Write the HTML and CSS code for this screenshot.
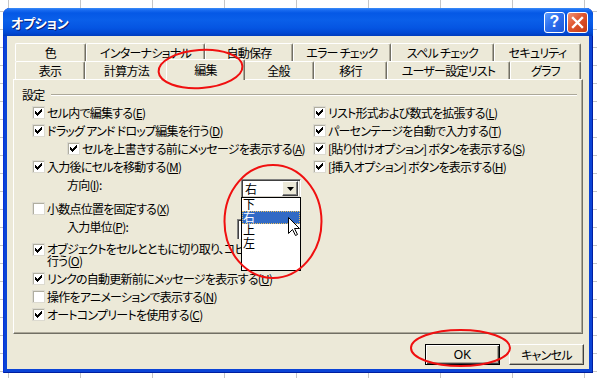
FILE: index.html
```html
<!DOCTYPE html>
<html lang="ja">
<head>
<meta charset="utf-8">
<title>オプション</title>
<link rel="stylesheet" href="styles.css">
</head>
<body>
<div class="window">
  <div class="titlebar">
    <span class="title">オプション</span>
    <div class="tb-btns">
      <span class="tb-btn help">?</span>
      <span class="tb-btn close"><svg width="13" height="13" viewBox="0 0 13 13"><path d="M2 2L11 11M11 2L2 11" stroke="#fff" stroke-width="2.4" stroke-linecap="square"/></svg></span>
    </div>
  </div>
  <div class="client">
    <div class="tabs">
      <div class="tabrow">
        <div class="tab t-71">色</div>
        <div class="tab t-119">インターナショナル</div>
        <div class="tab t-88">自動保存</div>
        <div class="tab t-98">エラー チェック</div>
        <div class="tab t-103">スペル チェック</div>
        <div class="tab t-87">セキュリティ</div>
      </div>
      <div class="tabrow">
        <div class="tab t-70">表示</div>
        <div class="tab t-83">計算方法</div>
        <div class="tab t-75 sel">編集</div>
        <div class="tab t-71">全般</div>
        <div class="tab t-73">移行</div>
        <div class="tab t-123">ユーザー設定リスト</div>
        <div class="tab t-71">グラフ</div>
      </div>
    </div>
    <div class="panel">
      <div class="group-head"><span>設定</span><span class="etch"></span></div>
      <div class="settings">
        <div class="col-left">
          <div class="row"><span class="cb"><svg class="chk" width="7" height="7" viewBox="0 0 7 7"><path d="M0 2h1v3H0zM1 3h1v3H1zM2 4h1v3H2zM3 3h1v3H3zM4 2h1v3H4zM5 1h1v3H5zM6 0h1v3H6z"/></svg></span>セル内で編集する(<u>E</u>)</div>
          <div class="row"><span class="cb"><svg class="chk" width="7" height="7" viewBox="0 0 7 7"><path d="M0 2h1v3H0zM1 3h1v3H1zM2 4h1v3H2zM3 3h1v3H3zM4 2h1v3H4zM5 1h1v3H5zM6 0h1v3H6z"/></svg></span>ドラッグ アンド ドロップ編集を行う(<u>D</u>)</div>
          <div class="row indent"><span class="cb"><svg class="chk" width="7" height="7" viewBox="0 0 7 7"><path d="M0 2h1v3H0zM1 3h1v3H1zM2 4h1v3H2zM3 3h1v3H3zM4 2h1v3H4zM5 1h1v3H5zM6 0h1v3H6z"/></svg></span>セルを上書きする前にメッセージを表示する(<u>A</u>)</div>
          <div class="row"><span class="cb"><svg class="chk" width="7" height="7" viewBox="0 0 7 7"><path d="M0 2h1v3H0zM1 3h1v3H1zM2 4h1v3H2zM3 3h1v3H3zM4 2h1v3H4zM5 1h1v3H5zM6 0h1v3H6z"/></svg></span>入力後にセルを移動する(<u>M</u>)</div>
          <div class="row indent">
            <span class="field-label dir-label">方向(<u>I</u>):</span>
            <div class="combo"><span class="combo-text">右</span><span class="drop-btn"><svg width="7" height="4" viewBox="0 0 7 4"><path d="M0 0h7L3.5 4z"/></svg></span></div>
          </div>
          <div class="row gap6"><span class="cb"></span>小数点位置を固定する(<u>X</u>)</div>
          <div class="row indent">
            <span class="field-label unit-label">入力単位(<u>P</u>):</span>
            <div class="textbox"></div>
          </div>
          <div class="row multi">
            <span class="cb"><svg class="chk" width="7" height="7" viewBox="0 0 7 7"><path d="M0 2h1v3H0zM1 3h1v3H1zM2 4h1v3H2zM3 3h1v3H3zM4 2h1v3H4zM5 1h1v3H5zM6 0h1v3H6z"/></svg></span>
            <span class="multi-text"><span class="line clip">オブジェクトをセルとともに切り取り、コピー、並べ替えを</span><span class="line">行う(<u>O</u>)</span></span>
          </div>
          <div class="row gap2"><span class="cb"><svg class="chk" width="7" height="7" viewBox="0 0 7 7"><path d="M0 2h1v3H0zM1 3h1v3H1zM2 4h1v3H2zM3 3h1v3H3zM4 2h1v3H4zM5 1h1v3H5zM6 0h1v3H6z"/></svg></span>リンクの自動更新前にメッセージを表示する(<u>U</u>)</div>
          <div class="row"><span class="cb"></span>操作をアニメーションで表示する(<u>N</u>)</div>
          <div class="row"><span class="cb"><svg class="chk" width="7" height="7" viewBox="0 0 7 7"><path d="M0 2h1v3H0zM1 3h1v3H1zM2 4h1v3H2zM3 3h1v3H3zM4 2h1v3H4zM5 1h1v3H5zM6 0h1v3H6z"/></svg></span>オートコンプリートを使用する(<u>C</u>)</div>
        </div>
        <div class="col-right">
          <div class="row"><span class="cb"><svg class="chk" width="7" height="7" viewBox="0 0 7 7"><path d="M0 2h1v3H0zM1 3h1v3H1zM2 4h1v3H2zM3 3h1v3H3zM4 2h1v3H4zM5 1h1v3H5zM6 0h1v3H6z"/></svg></span>リスト形式および数式を拡張する(<u>L</u>)</div>
          <div class="row"><span class="cb"><svg class="chk" width="7" height="7" viewBox="0 0 7 7"><path d="M0 2h1v3H0zM1 3h1v3H1zM2 4h1v3H2zM3 3h1v3H3zM4 2h1v3H4zM5 1h1v3H5zM6 0h1v3H6z"/></svg></span>パーセンテージを自動で入力する(<u>T</u>)</div>
          <div class="row"><span class="cb"><svg class="chk" width="7" height="7" viewBox="0 0 7 7"><path d="M0 2h1v3H0zM1 3h1v3H1zM2 4h1v3H2zM3 3h1v3H3zM4 2h1v3H4zM5 1h1v3H5zM6 0h1v3H6z"/></svg></span>[貼り付けオプション] ボタンを表示する(<u>S</u>)</div>
          <div class="row"><span class="cb"><svg class="chk" width="7" height="7" viewBox="0 0 7 7"><path d="M0 2h1v3H0zM1 3h1v3H1zM2 4h1v3H2zM3 3h1v3H3zM4 2h1v3H4zM5 1h1v3H5zM6 0h1v3H6z"/></svg></span>[挿入オプション] ボタンを表示する(<u>H</u>)</div>
        </div>
      </div>
    </div>
    <div class="buttons">
      <div class="btn default">OK</div>
      <div class="btn">キャンセル</div>
    </div>
  </div>
</div>

<div class="droplist">
  <div class="item">下</div>
  <div class="item hl">右</div>
  <div class="item">上</div>
  <div class="item">左</div>
</div>

<svg class="cursor" width="13" height="20" viewBox="0 0 13 20"><path d="M0.5 0.5V16.5L4.5 12.5L7.5 18.5L9.5 17.5L6.5 11.5H11.5Z" fill="#fff" stroke="#000" stroke-width="1" stroke-linejoin="miter"/></svg>

<svg class="marks" width="597" height="378" viewBox="0 0 597 378">
  <g fill="none" stroke="#f01010" stroke-width="2">
    <ellipse cx="200.5" cy="69" rx="42" ry="19" transform="rotate(-4 200.5 69)"/>
    <ellipse cx="273" cy="221.5" rx="48.5" ry="56.5"/>
    <ellipse cx="460.5" cy="348" rx="49.5" ry="18"/>
  </g>
</svg>
</body>
</html>
```
FILE: styles.css
```css
* { box-sizing: border-box; }
html, body { margin: 0; }
body {
  position: relative;
  width: 597px;
  height: 378px;
  overflow: hidden;
  padding: 8px 0 0 3px;
  font-family: "Noto Sans CJK JP", "Noto Sans", sans-serif;
  font-size: 12px;
  letter-spacing: -0.75px;
  font-feature-settings: "palt" 1;
  color: #000;
  background-color: #fff;
  background-image:
    linear-gradient(to right, #c6c6c6 1px, transparent 1px),
    linear-gradient(to bottom, #c6c6c6 1px, transparent 1px);
  background-size: 72px 18px, 72px 18px;
  background-position: 8px 0, 0 11px;
}
u { text-decoration: underline; text-underline-offset: 1px; }

.window {
  width: 590px;
  height: 365px;
  display: flex;
  flex-direction: column;
  background: #0b44d6;
  border-radius: 7px 7px 0 0;
  overflow: hidden;
  box-shadow: inset 1px 0 #0831d9, inset -1px 0 #001ea0, inset 0 -1px #001ea0;
}
.titlebar {
  flex: none;
  height: 28px;
  display: flex;
  align-items: center;
  padding: 0 5px 0 8px;
  background: linear-gradient(to bottom, #3b8df7 0px, #1a6cf0 2px, #0558e6 5px, #0a5fe9 12px, #0555e2 20px, #0148d3 25px, #003cbc 28px);
}
.title {
  flex: 1;
  color: #fff;
  font-weight: bold;
  font-size: 13px;
  letter-spacing: -0.3px;
  text-shadow: 1px 1px #0a1f73;
}
.tb-btns { display: flex; gap: 2px; }
.tb-btn {
  width: 21px;
  height: 21px;
  border: 1px solid #fff;
  border-radius: 3px;
  display: flex;
  align-items: center;
  justify-content: center;
  color: #fff;
  letter-spacing: 0;
}
.help {
  background: linear-gradient(135deg, #5c9cff 0%, #2c6fee 45%, #1c56d8 100%);
  font-family: "Liberation Sans", sans-serif;
  font-weight: bold;
  font-size: 16px;
}
.close {
  background: linear-gradient(135deg, #f09478 0%, #e0552e 45%, #c43c14 100%);
}

.client {
  flex: 1;
  margin: 0 4px 4px;
  background: #ece9d8;
  padding: 7px 6px 0;
  display: flex;
  flex-direction: column;
}

.tabs { padding: 0 2px; }
.tabrow { display: flex; height: 18px; }
.tab {
  flex: none;
  height: 18px;
  display: flex;
  align-items: center;
  justify-content: center;
  background: #ece9d8;
  border-top: 1px solid #fff;
  border-left: 1px solid #fff;
  border-right: 1px solid #716f64;
  border-radius: 2px 2px 0 0;
  box-shadow: inset -1px 0 #aca899;
  white-space: pre;
}
.tab.sel {
  position: relative;
  z-index: 1;
  height: 21px;
  margin: -2px -2px -1px;
  padding-bottom: 1px;
}
.t-70 { width: 70px; }
.t-71 { width: 71px; }
.t-73 { width: 73px; }
.t-75 { width: 75px; }
.t-75.sel { width: 79px; }
.t-83 { width: 83px; }
.t-87 { width: 87px; }
.t-88 { width: 88px; }
.t-98 { width: 98px; }
.t-103 { width: 103px; }
.t-119 { width: 119px; }
.t-123 { width: 123px; }

.panel {
  width: 570px;
  height: 255px;
  border-top: 1px solid #fff;
  border-left: 1px solid #fff;
  border-right: 1px solid #716f64;
  border-bottom: 1px solid #716f64;
  box-shadow: inset -1px -1px #aca899;
  padding: 5px 0 0 18px;
}
.group-head {
  height: 18px;
  display: flex;
  align-items: center;
  margin-left: -10px;
  margin-right: 5px;
}
.etch {
  flex: 1;
  height: 2px;
  margin-left: 6px;
  margin-top: 2px;
  border-top: 1px solid #aca899;
  border-bottom: 1px solid #fff;
}

.settings { display: flex; }
.col-left { width: 281px; flex: none; }
.col-right { flex: 1; }
.row {
  height: 18px;
  display: flex;
  align-items: center;
  white-space: nowrap;
}
.indent { padding-left: 35px; }
.gap6 { margin-top: 6px; }
.gap2 { margin-top: 2px; }
.row.multi {
  height: 24px;
  margin-top: 8px;
  align-items: flex-start;
}
.multi-text { display: flex; flex-direction: column; line-height: 12px; }
.line { display: block; height: 12px; }
.clip { width: 194px; overflow: hidden; }

.cb {
  flex: none;
  position: relative;
  width: 13px;
  height: 13px;
  margin-right: 2px;
  background: #fff;
  border-top: 1px solid #8e8f8f;
  border-left: 1px solid #8e8f8f;
  border-right: 1px solid #fff;
  border-bottom: 1px solid #fff;
  box-shadow: inset 1px 1px #b0aea0;
  outline: 1px solid #dcdad0;
  outline-offset: -1px;
}
.chk { position: absolute; left: 2px; top: 2px; fill: #000; shape-rendering: crispEdges; }

.field-label { flex: none; }
.dir-label { width: 174px; }
.unit-label { width: 170px; }
.combo {
  align-self: flex-start;
  margin-top: 4px;
  width: 60px;
  height: 19px;
  display: flex;
  background: #fff;
  border-top: 1px solid #808080;
  border-left: 1px solid #808080;
  border-right: 1px solid #fff;
  border-bottom: 1px solid #fff;
  box-shadow: inset 1px 1px #404040, inset -1px -1px #d4d0c8;
  padding: 2px 2px 2px 3px;
}
.combo-text { flex: 1; line-height: 13px; }
.drop-btn {
  width: 16px;
  height: 15px;
  margin-top: -1px;
  display: flex;
  align-items: center;
  justify-content: center;
  background: #ece9d8;
  border-top: 1px solid #fff;
  border-left: 1px solid #fff;
  border-right: 1px solid #404040;
  border-bottom: 1px solid #404040;
  box-shadow: inset -1px -1px #808080;
}
.textbox {
  align-self: flex-start;
  margin-top: 2px;
  width: 50px;
  height: 20px;
  background: #fff;
  border-top: 1px solid #808080;
  border-left: 1px solid #808080;
  box-shadow: inset 1px 1px #404040;
}

.buttons {
  display: flex;
  justify-content: flex-end;
  gap: 9px;
  margin-top: 10px;
  margin-right: -1px;
}
.btn {
  width: 75px;
  height: 21px;
  display: flex;
  align-items: center;
  justify-content: center;
  background: #ece9d8;
  border-top: 1px solid #fff;
  border-left: 1px solid #fff;
  border-right: 1px solid #404040;
  border-bottom: 1px solid #404040;
  box-shadow: inset -1px -1px #aca899;
}
.btn.default {
  border: 1px solid #000;
  box-shadow: inset 1px 1px #fff, inset -1px -1px #404040, inset -2px -2px #aca899;
  font-family: "Liberation Sans", sans-serif;
  letter-spacing: 0;
}

.droplist {
  position: absolute;
  left: 241px;
  top: 197px;
  width: 60px;
  height: 74px;
  background: #fff;
  border: 1px solid #000;
  z-index: 5;
}
.item {
  height: 13px;
  line-height: 12px;
  padding-left: 1px;
}
.item.hl {
  background: #316ac5;
  color: #fff;
  outline: 1px dotted #e8c060;
  outline-offset: -1px;
}
.cursor {
  position: absolute;
  left: 288px;
  top: 217px;
  z-index: 6;
}
.marks {
  position: absolute;
  left: 0;
  top: 0;
  z-index: 7;
  pointer-events: none;
}
```
